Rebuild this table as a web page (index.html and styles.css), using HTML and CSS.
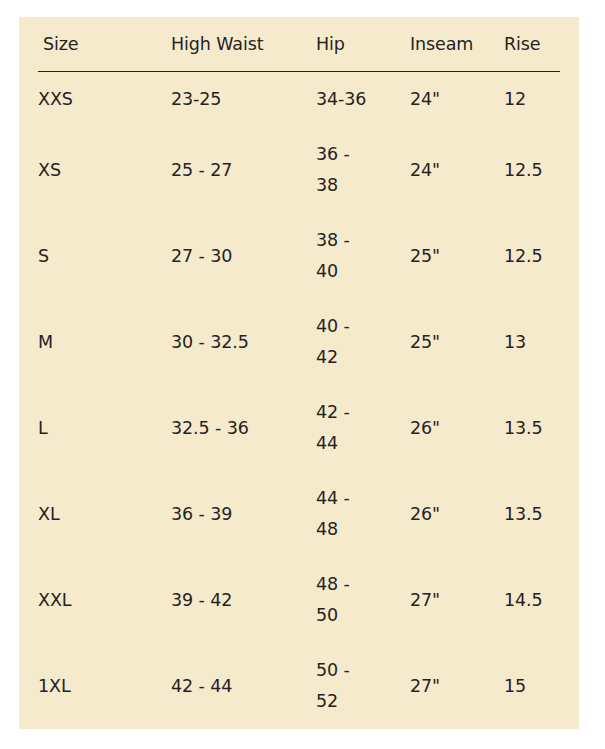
FILE: index.html
```html
<!DOCTYPE html>
<html lang="en">
<head>
<meta charset="utf-8">
<title>Size Chart</title>
<link rel="stylesheet" href="styles.css">
</head>
<body>
<div class="panel">
  <table class="chart">
    <colgroup>
      <col class="c-size">
      <col class="c-waist">
      <col class="c-hip">
      <col class="c-inseam">
      <col class="c-rise">
    </colgroup>
    <thead>
      <tr>
        <th class="first">Size</th>
        <th>High Waist</th>
        <th>Hip</th>
        <th>Inseam</th>
        <th>Rise</th>
      </tr>
    </thead>
    <tbody>
      <tr><td>XXS</td><td>23-25</td><td>34-36</td><td>24"</td><td>12</td></tr>
      <tr><td>XS</td><td>25 - 27</td><td>36 - 38</td><td>24"</td><td>12.5</td></tr>
      <tr><td>S</td><td>27 - 30</td><td>38 - 40</td><td>25"</td><td>12.5</td></tr>
      <tr><td>M</td><td>30 - 32.5</td><td>40 - 42</td><td>25"</td><td>13</td></tr>
      <tr><td>L</td><td>32.5 - 36</td><td>42 - 44</td><td>26"</td><td>13.5</td></tr>
      <tr><td>XL</td><td>36 - 39</td><td>44 - 48</td><td>26"</td><td>13.5</td></tr>
      <tr><td>XXL</td><td>39 - 42</td><td>48 - 50</td><td>27"</td><td>14.5</td></tr>
      <tr><td>1XL</td><td>42 - 44</td><td>50 - 52</td><td>27"</td><td>15</td></tr>
    </tbody>
  </table>
</div>
</body>
</html>
```

FILE: styles.css
```css
html, body {
  margin: 0;
  padding: 0;
  background: #ffffff;
}

body {
  padding: 17px 26px 20px 19px;
  font-family: "DejaVu Sans", "Liberation Sans", sans-serif;
  color: #26221f;
}

.panel {
  width: 560px;
  box-sizing: border-box;
  background: #f6eacd;
  padding: 0 19px;
}

.chart {
  width: 522px;
  border-collapse: collapse;
  table-layout: fixed;
  font-size: 17.5px;
  line-height: 31px;
  letter-spacing: -0.1px;
}

.c-size { width: 133px; }
.c-waist { width: 145px; }
.c-hip { width: 94px; }
.c-inseam { width: 94px; }
.c-rise { width: 56px; }

.chart th {
  font-weight: 400;
  text-align: left;
  padding: 12px 0 11px;
  border-bottom: 1.5px solid #231f1e;
  white-space: nowrap;
}

.chart th.first {
  padding-left: 5px;
}

.chart td {
  padding: 12px 36px 12px 0;
  vertical-align: middle;
  text-align: left;
}

.chart td:nth-child(1),
.chart td:nth-child(2),
.chart td:nth-child(4),
.chart td:nth-child(5) {
  padding-right: 0;
  white-space: nowrap;
}
```
